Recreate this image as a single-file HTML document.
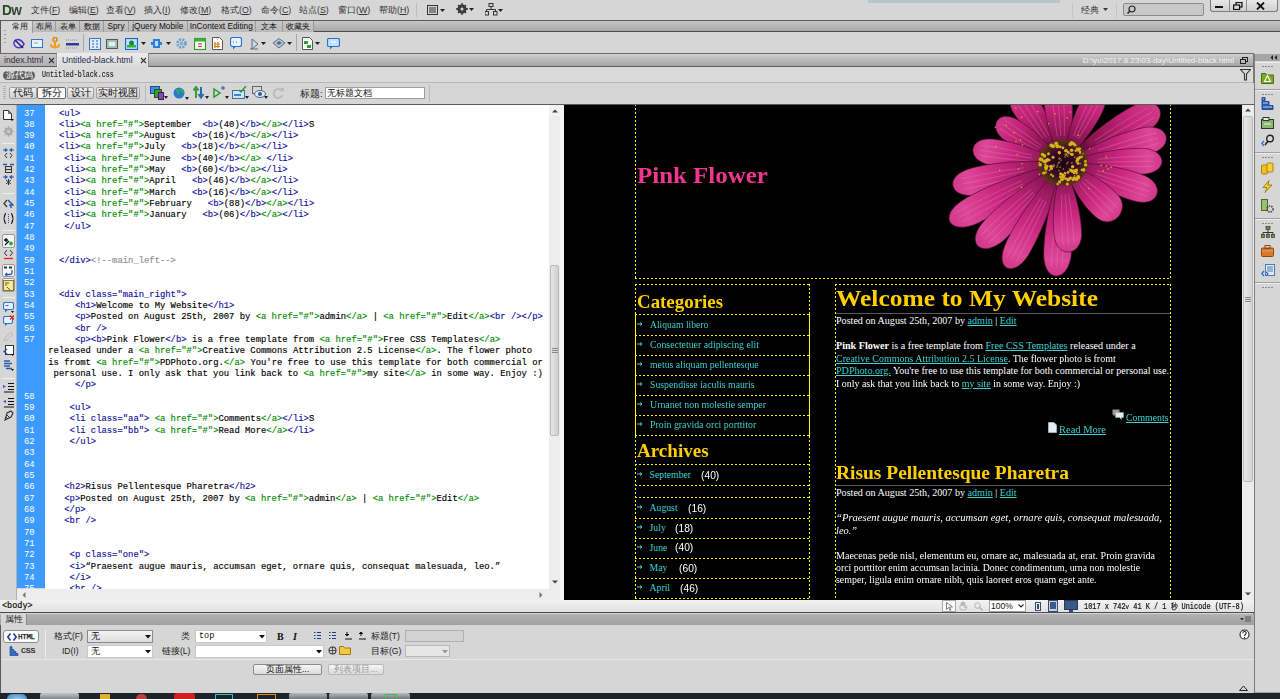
<!DOCTYPE html>
<html><head><meta charset="utf-8">
<style>
*{margin:0;padding:0;box-sizing:border-box}
html,body{width:1280px;height:699px;overflow:hidden;background:#d6d6d6;font-family:"Liberation Sans",sans-serif;font-size:10px;color:#000}
.a{position:absolute}
#menubar{left:0;top:0;width:1280px;height:20px;background:#d6d6d6}
.mi{position:absolute;top:4px;font-size:8.8px;line-height:12px;color:#333;white-space:nowrap}
#insert{left:0;top:20px;width:1280px;height:33px;background:#d6d6d6;border-top:1px solid #5a5a5a;border-left:1px solid #5a5a5a}
#itabs{left:0;top:0;width:1280px;height:11px;background:linear-gradient(#c6c6c6,#a8a8a8);border-bottom:1px solid #4c4c4c}
.it{position:absolute;top:0;height:11px;font-size:8.3px;white-space:nowrap;overflow:hidden;line-height:11px;text-align:center;color:#111;background:linear-gradient(#c9c9c9,#b8b8b8);border-right:1px solid #9a9a9a}
#doctabs{left:0;top:53px;width:1254px;height:14px;background:linear-gradient(#cfcfcf,#a4a4a4);border-top:1px solid #6a6a6a;border-bottom:1px solid #5c5c5c}
#related{left:0;top:67px;width:1254px;height:16px;background:#dadada;border-bottom:1px solid #b8b8b8}
#doctb{left:0;top:83px;width:1254px;height:22px;background:#d6d6d6;border-bottom:1px solid #5c5c5c;z-index:2}
#dock{left:1253px;top:54px;width:27px;height:639px;background:#d6d6d6;border-left:2px solid #7a7a7a}
#codeleft{left:0;top:105px;width:17px;height:495px;background:#d6d6d6;border-right:1px solid #b0b0b0}
#gutter{left:17px;top:105px;width:28px;height:483px;background:#3d9aff}
#code{left:45px;top:105px;width:504px;height:484px;background:#fff;overflow:hidden}
#vscroll{left:549px;top:105px;width:11px;height:484px;background:#ededed}
#hscroll{left:17px;top:589px;width:543px;height:11px;background:#ededed}
#splitter{left:560px;top:105px;width:4px;height:495px;background:#f4f4f4}
#preview{left:564px;top:104px;width:678px;height:496px;background:#000;overflow:hidden}
#pscroll{left:1242px;top:104px;width:12px;height:496px;background:#ececec}
#status{left:0;top:600px;width:1254px;height:13px;background:linear-gradient(#f2f2f2,#e2e2e2);border-bottom:1px solid #4a4a4a}
#prophead{left:0;top:614px;width:1254px;height:11px;background:linear-gradient(#b2b2b2,#a0a0a0)}
#props{left:0;top:625px;width:1254px;height:68px;background:#d6d6d6;border-left:1px solid #5a5a5a}
#taskbar{left:0;top:693px;width:1280px;height:6px;background:#1e2328}
.ln{position:absolute;left:0;width:28px;text-align:left;padding-left:7px;color:#fff;font-family:"Liberation Mono",monospace;font-size:8.87px;height:11.33px;line-height:11.33px}
.cl{position:absolute;left:3.3px;white-space:pre;font-family:"Liberation Mono",monospace;font-size:8.87px;line-height:11.33px;height:11.33px;color:#000;-webkit-text-stroke:0.15px currentColor}
.t{color:#10109a}.g{color:#008a00}.c{color:#8f8f8f}
.hd{position:absolute;height:1px;background:repeating-linear-gradient(90deg,#ff0 0 2px,transparent 2px 4px)}
.vd{position:absolute;width:1px;background:repeating-linear-gradient(180deg,#ff0 0 2px,transparent 2px 4px)}
.vs{position:absolute;width:1px;background:#ff0}
.gl{position:absolute;height:1px;background:#5a5a5a}
.pt{position:absolute;white-space:pre;font-family:"Liberation Serif",serif;line-height:1;transform-origin:0 0}
.lk{color:#40d0d0;text-decoration:underline}
.btn{position:absolute;top:4px;height:12px;border:1px solid #a0a0a0;border-radius:2px;background:linear-gradient(#f0f0f0,#d0d0d0);font-size:9.5px;line-height:10px;text-align:center;color:#111;white-space:nowrap}
.btn.sel{background:#f8f8f8;border-color:#6a6a6a}
.dsec{position:absolute;left:0;width:25px;background:#d6d6d6;border-top:1px solid #eeeeee;border-bottom:1px solid #a0a0a0}
.dsec::before{content:"";position:absolute;left:7px;top:3px;width:11px;height:1px;background:repeating-linear-gradient(90deg,#8a8a8a 0 2px,transparent 2px 3px)}
.plab{position:absolute;font-size:8.5px;line-height:10px;color:#222;white-space:nowrap}
.sel2{position:absolute;height:13px;background:#fff;border:1px solid #c8c8c8;font-size:8.5px;line-height:11px;padding-left:3px;color:#111;white-space:nowrap}
.dd{position:absolute}
.pbtn{position:absolute;height:11px;border:1px solid #8a8a8a;border-radius:2px;background:linear-gradient(#f6f6f6,#dadada);font-size:8.5px;line-height:9px;text-align:center;color:#111;white-space:nowrap}
</style></head><body>
<div id="menubar" class="a">
  <div class="a" style="left:2px;top:2px;font-size:15.5px;line-height:16px;font-weight:bold;color:#2e4a2c;letter-spacing:-0.8px;transform:scaleX(0.88);transform-origin:0 0">Dw</div>
  <div class="mi" style="left:31px">文件(<u>F</u>)</div>
  <div class="mi" style="left:69px">编辑(<u>E</u>)</div>
  <div class="mi" style="left:106px">查看(<u>V</u>)</div>
  <div class="mi" style="left:144px">插入(<u>I</u>)</div>
  <div class="mi" style="left:180px">修改(<u>M</u>)</div>
  <div class="mi" style="left:221px">格式(<u>O</u>)</div>
  <div class="mi" style="left:261px">命令(<u>C</u>)</div>
  <div class="mi" style="left:299px">站点(<u>S</u>)</div>
  <div class="mi" style="left:338px">窗口(<u>W</u>)</div>
  <div class="mi" style="left:379px">帮助(<u>H</u>)</div>
  <div class="a" style="left:416px;top:3px;width:1px;height:14px;background:#bdbdbd"></div>
  <svg class="a" style="left:427px;top:4px" width="18" height="12"><rect x="0.5" y="1.5" width="10" height="9" fill="none" stroke="#333"/><path d="M2,4h7M2,6h7M2,8h7" stroke="#333"/><path d="M13,5h5l-2.5,3z" fill="#222"/></svg>
  <svg class="a" style="left:456px;top:3px" width="18" height="12"><circle cx="6" cy="6" r="3.5" fill="none" stroke="#333" stroke-width="2"/><path d="M6,0v12M0,6h12M2,2l8,8M10,2l-8,8" stroke="#333" stroke-width="1.3"/><circle cx="6" cy="6" r="1.5" fill="#d6d6d6"/><path d="M13,5h5l-2.5,3z" fill="#222"/></svg>
  <svg class="a" style="left:485px;top:3px" width="18" height="13"><rect x="4" y="0.5" width="4" height="3" fill="none" stroke="#333"/><path d="M6,3.5v3M1.5,6.5h9M1.5,6.5v2M10.5,6.5v2" stroke="#333"/><rect x="0" y="8.5" width="3.5" height="3.5" fill="none" stroke="#333"/><rect x="8.5" y="8.5" width="3.5" height="3.5" fill="none" stroke="#333"/><path d="M13,6h5l-2.5,3z" fill="#222"/></svg>
  <div class="a" style="left:868px;top:0;width:192px;height:3px;background:#b9c3ca;border-radius:0 0 2px 2px"></div>
  <div class="a" style="left:1072px;top:3px;width:1px;height:15px;background:#c4c4c4"></div>
  <div class="mi" style="left:1081px;top:4px">经典</div>
  <svg class="a" style="left:1103px;top:8px" width="5" height="4"><path d="M0,0h5l-2.5,3z" fill="#333"/></svg>
  <div class="a" style="left:1116px;top:3px;width:1px;height:15px;background:#c4c4c4"></div>
  <div class="a" style="left:1123px;top:3px;width:81px;height:13px;background:#c8c8c8;border:1px solid #8a8a8a;border-radius:2px"></div>
  <svg class="a" style="left:1127px;top:5px" width="9" height="9"><circle cx="5" cy="4" r="3" fill="none" stroke="#222" stroke-width="1.2"/><path d="M3,6L0.5,8.5" stroke="#222" stroke-width="1.5"/></svg>
  <div class="a" style="left:1210px;top:0;width:68px;height:12px;background:linear-gradient(#e8e8e8,#cfcfcf);border:1px solid #7c7c7c;border-top:none;border-radius:0 0 3px 3px"></div>
  <div class="a" style="left:1229px;top:0;width:1px;height:12px;background:#8c8c8c"></div>
  <div class="a" style="left:1246px;top:0;width:1px;height:12px;background:#8c8c8c"></div>
  <div class="a" style="left:1215px;top:6px;width:8px;height:2px;background:#111"></div>
  <svg class="a" style="left:1233px;top:2px" width="10" height="8"><rect x="3" y="0.5" width="6" height="4.5" fill="none" stroke="#111" stroke-width="1.2"/><rect x="0.6" y="3" width="6" height="4.5" fill="#d8d8d8" stroke="#111" stroke-width="1.2"/></svg>
  <svg class="a" style="left:1256px;top:2px" width="9" height="8"><path d="M1,0.5L8,7.5M8,0.5L1,7.5" stroke="#111" stroke-width="1.8"/></svg>
</div>
<div id="insert" class="a">
  <div id="itabs" class="a"><div class="a" style="left:0;top:0;width:8px;height:12px;background:#d6d6d6"></div><div class="it" style="left:8.0px;width:23.5px;background:linear-gradient(#dcdcdc,#d2d2d2);border-bottom:none;height:12px">常用</div><div class="it" style="left:31.5px;width:23.5px;">布局</div><div class="it" style="left:55.0px;width:24.0px;">表单</div><div class="it" style="left:79.0px;width:24.0px;">数据</div><div class="it" style="left:103.0px;width:25.0px;">Spry</div><div class="it" style="left:128.0px;width:58.5px;">jQuery Mobile</div><div class="it" style="left:186.5px;width:68.5px;">InContext Editing</div><div class="it" style="left:255.0px;width:26.5px;">文本</div><div class="it" style="left:281.5px;width:31.5px;">收藏夹</div></div>
  <div class="a" style="left:3px;top:9px;width:2px;height:14px;background:repeating-linear-gradient(#9a9a9a 0 1.5px,transparent 1.5px 4px)"></div>
  
<svg class="a" style="left:12px;top:17px" width="12" height="12"><path d="M1,4 C3,0 8,1 11,6 C9,11 3,11 1,6z" fill="none" stroke="#4a3ec8" stroke-width="1.6"/><path d="M2,2L10,10" stroke="#221a80" stroke-width="1.4"/></svg>
<svg class="a" style="left:30px;top:18px" width="12" height="10"><rect x="0.5" y="0.5" width="11" height="8" fill="#e8f2fc" stroke="#2f78c8"/><path d="M3,4h4" stroke="#8aa"/></svg>
<svg class="a" style="left:48px;top:16px" width="12" height="13"><circle cx="6" cy="2.5" r="2" fill="none" stroke="#e08a10" stroke-width="1.6"/><path d="M6,4.5v7M2,8c0,3 8,3 8,0M1,8h2M9,8h2" stroke="#f0a020" stroke-width="2" fill="none"/></svg>
<svg class="a" style="left:65px;top:17px" width="13" height="12"><path d="M0,2h12M0,10h12" stroke="#8c8c8c" stroke-dasharray="1 1"/><rect x="0" y="5" width="13" height="2.5" fill="#2a3c9c"/></svg>
<div class="a" style="left:82px;top:13px;width:1px;height:17px;background:#a8a8a8"></div>
<svg class="a" style="left:88px;top:17px" width="12" height="12"><rect x="0.5" y="0.5" width="11" height="11" fill="#dfeeff" stroke="#3a72c0"/><path d="M3,3h2M7,3h2M3,6h2M7,6h2M3,9h2M7,9h2" stroke="#2a5ab0"/></svg>
<svg class="a" style="left:105px;top:18px" width="12" height="10"><rect x="0.5" y="0.5" width="11" height="9" fill="#cfcfcf" stroke="#555"/><rect x="2" y="2" width="8" height="6" fill="#e8f0e8" stroke="#6a9"/></svg>
<svg class="a" style="left:124px;top:17px" width="13" height="12"><rect x="0.5" y="0.5" width="12" height="11" fill="#bfe0ff" stroke="#1a64d0" stroke-width="1.2"/><circle cx="6.5" cy="5" r="2.5" fill="#1a8a2a"/><rect x="2" y="7" width="9" height="2.5" fill="#30b040"/></svg>
<svg class="a" style="left:140px;top:21px" width="5" height="4"><path d="M0,0h5l-2.5,3z" fill="#222"/></svg>
<svg class="a" style="left:150px;top:16px" width="11" height="13"><path d="M2,2h7v3h2v3h-2v3h-7v-3h-2v-3h2z" fill="#2a7ee0"/><path d="M4,4h3v5h-3z" fill="#bfe0ff"/></svg>
<svg class="a" style="left:165px;top:21px" width="5" height="4"><path d="M0,0h5l-2.5,3z" fill="#222"/></svg>
<svg class="a" style="left:175px;top:17px" width="11" height="11"><circle cx="5.5" cy="5.5" r="4" fill="none" stroke="#6aa0c8" stroke-width="2.5" stroke-dasharray="2 1.2"/><circle cx="5.5" cy="5.5" r="2" fill="#7ab4dc"/></svg>
<svg class="a" style="left:193px;top:16px" width="12" height="13"><rect x="0.5" y="1.5" width="11" height="11" fill="#f4fff0" stroke="#2a9a2a" stroke-width="1.2"/><rect x="0.5" y="1.5" width="11" height="3" fill="#3ab03a"/><path d="M4,7h4M4,9.5h4" stroke="#c03030"/></svg>
<svg class="a" style="left:211px;top:16px" width="11" height="13"><path d="M0.5,0.5h7l3,3v9h-10z" fill="#fff" stroke="#555"/><path d="M3,5v6M6,5v6M2,7h6M2,9.5h6" stroke="#e07a10" stroke-width="1.2"/></svg>
<svg class="a" style="left:229px;top:16px" width="12" height="13"><rect x="0.5" y="0.5" width="11" height="9" rx="2" fill="#e8f4ff" stroke="#2a70c8" stroke-width="1.2"/><path d="M3,9.5v3l3-3" fill="#2a70c8"/><path d="M3,5h1M6,5h1" stroke="#2a70c8"/></svg>
<svg class="a" style="left:247px;top:17px" width="12" height="12"><path d="M2,11h8M4,1v10L10,6z" fill="#c8d8f0" stroke="#666"/></svg>
<svg class="a" style="left:260px;top:21px" width="5" height="4"><path d="M0,0h5l-2.5,3z" fill="#222"/></svg>
<svg class="a" style="left:271px;top:17px" width="14" height="11"><path d="M1,5L7,0.5L13,5L7,10z" fill="#b8c8dc" stroke="#5a6a7c"/><path d="M4,5L7,3L10,5L7,7z" fill="#5a6a8c"/></svg>
<svg class="a" style="left:286px;top:21px" width="5" height="4"><path d="M0,0h5l-2.5,3z" fill="#222"/></svg>
<div class="a" style="left:295px;top:13px;width:1px;height:17px;background:#a8a8a8"></div>
<svg class="a" style="left:301px;top:16px" width="11" height="13"><path d="M0.5,0.5h7l3,3v9h-10z" fill="#fff" stroke="#555"/><path d="M2,4h4v3h-4zM5,8h4v3h-4z" fill="#2aa02a"/></svg>
<svg class="a" style="left:314px;top:21px" width="5" height="4"><path d="M0,0h5l-2.5,3z" fill="#222"/></svg>
<svg class="a" style="left:326px;top:17px" width="13" height="12"><rect x="0.5" y="0.5" width="12" height="8" rx="1.5" fill="#bfe0ff" stroke="#2a70c8" stroke-width="1.2"/><path d="M3,8.5v3l3-3" fill="#2a70c8"/><path d="M4,4h5" stroke="#fff"/></svg>

</div>
<div id="doctabs" class="a">
  <div class="a" style="left:0;top:0;width:57px;height:12px;background:linear-gradient(#c8c8c8,#b0b0b0);border-right:1px solid #9a9a9a"></div>
  <div class="a" style="left:4px;top:1px;font-size:8.6px;line-height:11px;color:#3a2a3a">index.html</div>
  <svg class="a" style="left:48px;top:3px" width="7" height="7"><path d="M1,1L6,6M6,1L1,6" stroke="#333" stroke-width="1.1"/></svg>
  <div class="a" style="left:57px;top:-1px;width:92px;height:14px;background:linear-gradient(#ececec,#dadada);border-left:1px solid #f4f4f4;border-right:1px solid #8a8a8a"></div>
  <div class="a" style="left:62px;top:1px;font-size:8.6px;line-height:11px;color:#2a2a50">Untitled-black.html</div>
  <svg class="a" style="left:140px;top:3px" width="7" height="7"><path d="M1,1L6,6M6,1L1,6" stroke="#333" stroke-width="1.1"/></svg>
  <div class="a" style="right:20px;top:1px;font-size:8px;line-height:11px;color:#f4f4f4;white-space:nowrap">D:\yu\2017.8.23\03-day\Untitled-black.html</div>
  <svg class="a" style="left:1240px;top:3px" width="8" height="7"><rect x="2.5" y="0.5" width="5" height="4" fill="none" stroke="#222"/><rect x="0.5" y="2.5" width="5" height="4" fill="#b8b8b8" stroke="#222"/></svg>
</div>
<div id="related" class="a">
  <div class="a" style="left:3px;top:4px;width:32px;height:9px;border-radius:5px;background:#5e5e5e;color:#fff;font-size:8.5px;line-height:9px;text-align:center">源代码</div>
  <div class="a" style="left:42px;top:3px;font-family:'Liberation Mono',monospace;font-size:8.5px;line-height:11px;color:#222;-webkit-text-stroke:0.15px #222;transform:scaleX(0.78);transform-origin:0 0">Untitled-black.css</div>
  <svg class="a" style="left:1240px;top:2px" width="11" height="12"><path d="M0.5,0.5h10L6.5,5v6h-2V5z" fill="none" stroke="#333" stroke-width="1.1"/></svg>
</div>
<div id="doctb" class="a">
  <div class="a" style="left:3px;top:3px;width:3px;height:14px;background:repeating-linear-gradient(#b0b0b0 0 1px,transparent 1px 2px)"></div>
  <div class="btn" style="left:9px;width:28px">代码</div>
  <div class="btn sel" style="left:37px;width:29px">拆分</div>
  <div class="btn" style="left:67px;width:27px">设计</div>
  <div class="btn" style="left:96px;width:44px">实时视图</div>
  <div class="a" style="left:145px;top:2px;width:1px;height:17px;background:#b8b8b8"></div>
  <svg class="a" style="left:150px;top:3px" width="18" height="14"><rect x="0.5" y="0.5" width="9" height="7" fill="#4a8ae0" stroke="#1a4a90"/><rect x="4.5" y="3.5" width="7" height="8" fill="#30a030" stroke="#1a5a1a"/><rect x="8.5" y="6.5" width="5" height="7" fill="#8a4ab0" stroke="#3a1a60"/><path d="M14,10h4l-2,3z" fill="#222"/></svg>
  <svg class="a" style="left:173px;top:4px" width="16" height="13"><circle cx="6" cy="6" r="5.5" fill="#2a7ad0"/><path d="M3,3c2,0 3,2 2,4M7,2c1,2 3,2 4,4" stroke="#3ab040" stroke-width="2" fill="none"/><path d="M12,10h4l-2,3z" fill="#222"/></svg>
  <svg class="a" style="left:193px;top:3px" width="16" height="14"><path d="M3,12V2M0.5,4.5L3,1L5.5,4.5" stroke="#3a9a3a" stroke-width="2" fill="none"/><path d="M8,1v10M5.5,8L8,11.5L10.5,8" stroke="#2a6ab0" stroke-width="2" fill="none"/><path d="M12,10h4l-2,3z" fill="#222"/></svg>
  <svg class="a" style="left:213px;top:3px" width="16" height="14"><path d="M1,3L7,7L1,11z" fill="none" stroke="#2a9a2a" stroke-width="1.5"/><path d="M8,2h4M10,0v4" stroke="#4a70b0" stroke-width="1.3"/><path d="M12,10h4l-2,3z" fill="#222"/></svg>
  <svg class="a" style="left:232px;top:3px" width="17" height="14"><rect x="0.5" y="4.5" width="12" height="8" fill="#cfe4f8" stroke="#4a6a9a"/><path d="M2,9h7" stroke="#2a8ad0" stroke-width="2"/><path d="M7,4L9,6L14,0" stroke="#2a9a2a" stroke-width="1.5" fill="none"/><path d="M13,10h4l-2,3z" fill="#222"/></svg>
  <svg class="a" style="left:252px;top:3px" width="16" height="14"><rect x="0.5" y="0.5" width="9" height="7" fill="none" stroke="#666"/><ellipse cx="8" cy="8" rx="5.5" ry="3.5" fill="#e0e8f0" stroke="#4a6a9a"/><circle cx="8" cy="8" r="2" fill="#2a5aa0"/><path d="M12,10h4l-2,3z" fill="#222"/></svg>
  <svg class="a" style="left:273px;top:4px" width="11" height="12"><path d="M9,4A4.5,4.5 0 1 0 9.5,8" fill="none" stroke="#bcbcbc" stroke-width="2"/><path d="M7,1h4v4z" fill="#bcbcbc"/></svg>
  <div class="a" style="left:300px;top:5px;font-size:9.5px;line-height:11px;color:#222">标题:</div>
  <div class="a" style="left:325px;top:4px;width:100px;height:12px;background:#fff;border:1px solid #9c9c9c;font-size:9px;line-height:10px;padding-left:1px;color:#111">无标题文档</div>
  <div class="a" style="left:429px;top:2px;width:1px;height:17px;background:#b8b8b8"></div>
</div>
<div id="dock" class="a">
  <div class="a" style="left:0;top:0;width:25px;height:7px;background:#a6a6a6"></div>
  <svg class="a" style="left:15px;top:1px" width="8" height="5"><path d="M3,0L0.5,2.5L3,5zM7,0L4.5,2.5L7,5z" fill="#222"/></svg>
  <div class="dsec" style="top:8px;height:28px"></div>
  <div class="dsec" style="top:36px;height:63px"></div>
  <div class="dsec" style="top:99px;height:66px"></div>
  <div class="dsec" style="top:165px;height:64px"></div>
  <div class="dsec" style="top:229px;height:410px"></div>
  <svg class="a" style="left:6px;top:18px" width="13" height="12"><path d="M0.5,1.5h4l1,1.5h7v8.5h-12z" fill="#7aa822" stroke="#4a7010"/><path d="M6.5,3.5L3.5,9.5h6z" fill="none" stroke="#fff" stroke-width="1.1"/></svg>
  <svg class="a" style="left:6px;top:43px" width="13" height="13"><path d="M1,0.5h3v4h4v4h4v4h-11z" fill="#2a5ab8" stroke="#1a3a80" stroke-width="0.8"/><path d="M2,2h1M2,6h5M2,10h9" stroke="#bcd4f4"/></svg>
  <svg class="a" style="left:6px;top:63px" width="13" height="12"><rect x="0.5" y="2.5" width="12" height="9" fill="#8ab870" stroke="#333"/><rect x="2" y="0.5" width="6" height="3" fill="#e8e8e8" stroke="#333"/><path d="M3,7h7" stroke="#e0ffe0"/></svg>
  <svg class="a" style="left:6px;top:80px" width="14" height="13"><circle cx="9" cy="4.5" r="3.3" fill="none" stroke="#222" stroke-width="1.4"/><path d="M7,7L4,11" stroke="#222" stroke-width="1.6"/><path d="M3,7L0.8,9.5L3,12M5.5,12" stroke="#2a6ad0" stroke-width="1.2" fill="none"/></svg>
  <svg class="a" style="left:6px;top:108px" width="13" height="13"><rect x="0.5" y="3" width="6" height="9" rx="1" fill="#f0c020" stroke="#b08010"/><rect x="6" y="1" width="6" height="9" rx="1" fill="#f8d030" stroke="#b08010"/></svg>
  <svg class="a" style="left:7px;top:126px" width="11" height="13"><path d="M7,0.5L1,7.5h4L3,12.5L10,5h-4z" fill="#f4d020" stroke="#8a7010" stroke-width="0.8"/></svg>
  <svg class="a" style="left:6px;top:145px" width="13" height="14"><rect x="0.5" y="0.5" width="6" height="11" fill="#9ac070" stroke="#4a6a30"/><circle cx="9" cy="10" r="3" fill="none" stroke="#444" stroke-width="1.6" stroke-dasharray="1.5 1"/></svg>
  <svg class="a" style="left:6px;top:172px" width="14" height="12"><rect x="5" y="0.5" width="4" height="3" fill="#6a9a30" stroke="#333" stroke-width="0.7"/><path d="M7,3.5v3M2,6.5h10M2,6.5v2M7,6.5v2M12,6.5v2" stroke="#333"/><rect x="0.5" y="8.5" width="3" height="3" fill="#6a9a30" stroke="#333" stroke-width="0.7"/><rect x="5.5" y="8.5" width="3" height="3" fill="#6a9a30" stroke="#333" stroke-width="0.7"/><rect x="10.5" y="8.5" width="3" height="3" fill="#6a9a30" stroke="#333" stroke-width="0.7"/></svg>
  <svg class="a" style="left:6px;top:191px" width="13" height="12"><rect x="0.5" y="3" width="12" height="8.5" rx="1" fill="#d8782a" stroke="#8a4a10"/><rect x="4" y="0.5" width="5" height="3" fill="none" stroke="#8a4a10"/><path d="M1,6h11" stroke="#f0a060"/></svg>
  <svg class="a" style="left:6px;top:210px" width="14" height="13"><rect x="4.5" y="0.5" width="9" height="11" fill="#e0ecf8" stroke="#4a7ab0"/><path d="M6,3h6M6,5h6M6,7h6" stroke="#4a7ab0"/><path d="M3,7L0.8,9.5L3,12M5,8l2,1.5l-2,2.5" stroke="#2a6ad0" stroke-width="1.2" fill="none"/></svg>
</div>
<div id="codeleft" class="a">
<svg class="a" style="left:3px;top:4.9px" width="11" height="11"><path d="M0.5,0.5h5l3,3v6h-8z" fill="#fff" stroke="#333"/><path d="M5.5,0.5v3h3" fill="#4a8ad0" stroke="#333" stroke-width="0.6"/><path d="M7,9h4l-2,2z" fill="#111"/></svg>
<svg class="a" style="left:3px;top:21.0px" width="11" height="11"><circle cx="5.5" cy="5.5" r="3" fill="none" stroke="#aaa" stroke-width="2"/><path d="M5.5,0v11M0,5.5h11M1.5,1.5l8,8M9.5,1.5l-8,8" stroke="#aaa" stroke-width="1"/><circle cx="5.5" cy="5.5" r="1.3" fill="#d6d6d6"/></svg>
<div class="a" style="left:2px;top:38px;width:13px;height:1px;background:#b4b4b4;border-bottom:1px solid #eee"></div>
<svg class="a" style="left:3px;top:42.5px" width="11" height="11"><path d="M0,2h4M7,2h4M2,0.5l2,1.5l-2,1.5M9,0.5l-2,1.5l2,1.5" stroke="#2a5ab0" stroke-width="1.2" fill="none"/><path d="M4,5l-2,2.5l2,2.5M7,5l2,2.5l-2,2.5" stroke="#333" fill="none"/></svg>
<svg class="a" style="left:3px;top:57.5px" width="11" height="11"><path d="M0,1.5h4M7,1.5h4" stroke="#2a5ab0" stroke-width="1.5"/><rect x="2.5" y="3.5" width="6" height="6" fill="none" stroke="#333"/><path d="M2.5,6.5h6" stroke="#333"/></svg>
<svg class="a" style="left:3px;top:70.2px" width="11" height="11"><path d="M0,2h4M7,2h4M2,0.5l2,1.5l-2,1.5M9,0.5l-2,1.5l2,1.5" stroke="#2a5ab0" stroke-width="1.2" fill="none"/><path d="M5.5,4v6M3,5l5,4M8,5l-5,4" stroke="#333"/></svg>
<div class="a" style="left:2px;top:88px;width:13px;height:1px;background:#b4b4b4;border-bottom:1px solid #eee"></div>
<svg class="a" style="left:3px;top:93.0px" width="11" height="11"><path d="M4,2l-3,3.5l3,3.5" stroke="#333" stroke-width="1.2" fill="none"/><path d="M5,2L10,7L7,7L8.5,10" stroke="#2a5ab0" stroke-width="1.5" fill="none"/></svg>
<svg class="a" style="left:3px;top:107.9px" width="11" height="11"><path d="M3,0.5C1,0.5 2,5.5 0.5,5.5C2,5.5 1,10.5 3,10.5M8,0.5C10,0.5 9,5.5 10.5,5.5C9,5.5 10,10.5 8,10.5" stroke="#111" stroke-width="1.2" fill="none"/><path d="M5.5,1v9" stroke="#2a5ab0" stroke-dasharray="1 1"/></svg>
<div class="a" style="left:2px;top:125px;width:13px;height:1px;background:#b4b4b4;border-bottom:1px solid #eee"></div>
<div class="a" style="left:2px;top:129px;width:13px;height:14px;background:#f6f6f6;border:1px solid #9a9a9a;border-radius:2px"></div>
<svg class="a" style="left:3px;top:130.8px" width="11" height="11"><path d="M1,4h4M3,2v4" stroke="#111" stroke-width="1.3"/><path d="M2,9l4-4" stroke="#111" stroke-width="1.3"/><circle cx="8" cy="7.5" r="2" fill="#30b030"/></svg>
<svg class="a" style="left:3px;top:143.5px" width="11" height="11"><path d="M4,1L1.5,4L4,7M7,1L9.5,4L7,7" stroke="#333" fill="none"/><path d="M1,9.5h9" stroke="#e02020" stroke-width="1.3"/></svg>
<div class="a" style="left:2px;top:159px;width:13px;height:13px;background:#f6f6f6;border:1px solid #9a9a9a;border-radius:2px"></div>
<svg class="a" style="left:3px;top:159.8px" width="11" height="11"><path d="M1,1.5h3v2h-3zM6,1.5h3v2h-3z" fill="#333"/><path d="M9,5v2.5a2,2 0 0 1-2,2h-4M4,8l-1.5,1.5l1.5,1.5" stroke="#2a5ab0" stroke-width="1.3" fill="none"/></svg>
<div class="a" style="left:2px;top:173px;width:13px;height:14px;background:#f6f6f6;border:1px solid #9a9a9a;border-radius:2px"></div>
<svg class="a" style="left:3px;top:174.5px" width="11" height="11"><rect x="0.5" y="0.5" width="10" height="10" fill="#f4e8a0" stroke="#8a7a30"/><path d="M2,3h4M2,5h2M4,7l3,3" stroke="#6a5a10"/></svg>
<div class="a" style="left:2px;top:191.60000000000002px;width:13px;height:1px;background:#b4b4b4;border-bottom:1px solid #eee"></div>
<svg class="a" style="left:3px;top:196.5px" width="11" height="11"><rect x="0.5" y="0.5" width="10" height="7" rx="1.5" fill="#e8f2ff" stroke="#2a70d0" stroke-width="1.1"/><path d="M2,7.5v3l3-3" fill="#2a70d0"/><path d="M2.5,3.5h3" stroke="#2a70d0"/><path d="M8,9h3l-1.5,2z" fill="#111"/></svg>
<svg class="a" style="left:3px;top:210.1px" width="11" height="11"><rect x="0.5" y="1.5" width="9" height="7" rx="1.5" fill="#e8f2ff" stroke="#2a70d0" stroke-width="1.1"/><path d="M2,8.5v2.5l3-2.5" fill="#2a70d0"/><path d="M7,0.5l4,4M11,0.5l-4,4" stroke="#e02020" stroke-width="1.3"/></svg>
<svg class="a" style="left:3px;top:226.2px" width="11" height="11"><path d="M1,10l3-1l6-6l-2-2l-6,6z" fill="none" stroke="#b8b8b8"/><path d="M1,10h9" stroke="#c8c8c8"/></svg>
<svg class="a" style="left:3px;top:239.9px" width="11" height="11"><rect x="2.5" y="0.5" width="8" height="9" fill="#fff" stroke="#333"/><path d="M4,4l-3,2.5l3,2.5" stroke="#2a5ab0" stroke-width="1.4" fill="none"/><path d="M8,9h3l-1.5,2z" fill="#111"/></svg>
<svg class="a" style="left:3px;top:254.5px" width="11" height="11"><path d="M1,1h6M1,3.5h8M1,6h6M3,8.5h6" stroke="#2a5ab0" stroke-width="1.3"/><path d="M8,9h3l-1.5,2z" fill="#111"/></svg>
<div class="a" style="left:2px;top:273px;width:13px;height:1px;background:#b4b4b4;border-bottom:1px solid #eee"></div>
<svg class="a" style="left:3px;top:276.5px" width="11" height="11"><path d="M5,1.5h6M5,4.5h6M5,7.5h6M1,10h10" stroke="#111" stroke-width="1.2"/><path d="M0,3l3,1.5l-3,1.5" fill="#2a5ab0"/></svg>
<svg class="a" style="left:3px;top:291.5px" width="11" height="11"><path d="M5,1.5h6M5,4.5h6M5,7.5h6M1,10h10" stroke="#111" stroke-width="1.2"/><path d="M3,3l-3,1.5l3,1.5" fill="#2a5ab0"/></svg>
<svg class="a" style="left:3px;top:305.1px" width="11" height="11"><path d="M2,10l2-7l4-2l2,2l-2,4z" fill="none" stroke="#333" stroke-width="1.1"/><path d="M4,5l3,3M3,7l2,2" stroke="#333"/></svg>
</div>
<div id="gutter" class="a">
<div class="ln" style="top:3.50px">37</div>
<div class="ln" style="top:14.83px">38</div>
<div class="ln" style="top:26.16px">39</div>
<div class="ln" style="top:37.49px">40</div>
<div class="ln" style="top:48.82px">41</div>
<div class="ln" style="top:60.15px">42</div>
<div class="ln" style="top:71.48px">43</div>
<div class="ln" style="top:82.81px">44</div>
<div class="ln" style="top:94.14px">45</div>
<div class="ln" style="top:105.47px">46</div>
<div class="ln" style="top:116.80px">47</div>
<div class="ln" style="top:128.13px">48</div>
<div class="ln" style="top:139.46px">49</div>
<div class="ln" style="top:150.79px">50</div>
<div class="ln" style="top:162.12px">51</div>
<div class="ln" style="top:173.45px">52</div>
<div class="ln" style="top:184.78px">53</div>
<div class="ln" style="top:196.11px">54</div>
<div class="ln" style="top:207.44px">55</div>
<div class="ln" style="top:218.77px">56</div>
<div class="ln" style="top:230.10px">57</div>
<div class="ln" style="top:286.75px">58</div>
<div class="ln" style="top:298.08px">59</div>
<div class="ln" style="top:309.41px">60</div>
<div class="ln" style="top:320.74px">61</div>
<div class="ln" style="top:332.07px">62</div>
<div class="ln" style="top:343.40px">63</div>
<div class="ln" style="top:354.73px">64</div>
<div class="ln" style="top:366.06px">65</div>
<div class="ln" style="top:377.39px">66</div>
<div class="ln" style="top:388.72px">67</div>
<div class="ln" style="top:400.05px">68</div>
<div class="ln" style="top:411.38px">69</div>
<div class="ln" style="top:422.71px">70</div>
<div class="ln" style="top:434.04px">71</div>
<div class="ln" style="top:445.37px">72</div>
<div class="ln" style="top:456.70px">73</div>
<div class="ln" style="top:468.03px">74</div>
<div class="ln" style="top:479.36px">75</div>
</div>
<div id="code" class="a">
<div class="cl" style="top:3.50px">  <span class="t">&lt;ul&gt;</span></div>
<div class="cl" style="top:14.83px">  <span class="t">&lt;li&gt;</span><span class="g">&lt;a href="#"&gt;</span>September  <span class="t">&lt;b&gt;</span>(40)<span class="t">&lt;/b&gt;</span><span class="g">&lt;/a&gt;</span><span class="t">&lt;/li&gt;</span>S</div>
<div class="cl" style="top:26.16px">  <span class="t">&lt;li&gt;</span><span class="g">&lt;a href="#"&gt;</span>August   <span class="t">&lt;b&gt;</span>(16)<span class="t">&lt;/b&gt;</span><span class="g">&lt;/a&gt;</span><span class="t">&lt;/li&gt;</span></div>
<div class="cl" style="top:37.49px">  <span class="t">&lt;li&gt;</span><span class="g">&lt;a href="#"&gt;</span>July   <span class="t">&lt;b&gt;</span>(18)<span class="t">&lt;/b&gt;</span><span class="g">&lt;/a&gt;</span><span class="t">&lt;/li&gt;</span></div>
<div class="cl" style="top:48.82px">   <span class="t">&lt;li&gt;</span><span class="g">&lt;a href="#"&gt;</span>June  <span class="t">&lt;b&gt;</span>(40)<span class="t">&lt;/b&gt;</span><span class="g">&lt;/a&gt;</span> <span class="t">&lt;/li&gt;</span></div>
<div class="cl" style="top:60.15px">   <span class="t">&lt;li&gt;</span><span class="g">&lt;a href="#"&gt;</span>May   <span class="t">&lt;b&gt;</span>(60)<span class="t">&lt;/b&gt;</span><span class="g">&lt;/a&gt;</span><span class="t">&lt;/li&gt;</span></div>
<div class="cl" style="top:71.48px">   <span class="t">&lt;li&gt;</span><span class="g">&lt;a href="#"&gt;</span>April   <span class="t">&lt;b&gt;</span>(46)<span class="t">&lt;/b&gt;</span><span class="g">&lt;/a&gt;</span><span class="t">&lt;/li&gt;</span></div>
<div class="cl" style="top:82.81px">   <span class="t">&lt;li&gt;</span><span class="g">&lt;a href="#"&gt;</span>March   <span class="t">&lt;b&gt;</span>(16)<span class="t">&lt;/b&gt;</span><span class="g">&lt;/a&gt;</span><span class="t">&lt;/li&gt;</span></div>
<div class="cl" style="top:94.14px">   <span class="t">&lt;li&gt;</span><span class="g">&lt;a href="#"&gt;</span>February   <span class="t">&lt;b&gt;</span>(88)<span class="t">&lt;/b&gt;</span><span class="g">&lt;/a&gt;</span><span class="t">&lt;/li&gt;</span></div>
<div class="cl" style="top:105.47px">   <span class="t">&lt;li&gt;</span><span class="g">&lt;a href="#"&gt;</span>January   <span class="t">&lt;b&gt;</span>(06)<span class="t">&lt;/b&gt;</span><span class="g">&lt;/a&gt;</span><span class="t">&lt;/li&gt;</span></div>
<div class="cl" style="top:116.80px">   <span class="t">&lt;/ul&gt;</span></div>
<div class="cl" style="top:150.79px">  <span class="t">&lt;/div&gt;</span><span class="c">&lt;!--main_left--&gt;</span></div>
<div class="cl" style="top:184.78px">  <span class="t">&lt;div class="main_right"&gt;</span></div>
<div class="cl" style="top:196.11px">     <span class="t">&lt;h1&gt;</span>Welcome to My Website<span class="t">&lt;/h1&gt;</span></div>
<div class="cl" style="top:207.44px">     <span class="t">&lt;p&gt;</span>Posted on August 25th, 2007 by <span class="g">&lt;a href="#"&gt;</span>admin<span class="g">&lt;/a&gt;</span> | <span class="g">&lt;a href="#"&gt;</span>Edit<span class="g">&lt;/a&gt;</span><span class="t">&lt;br /&gt;</span><span class="t">&lt;/p&gt;</span></div>
<div class="cl" style="top:218.77px">     <span class="t">&lt;br /&gt;</span></div>
<div class="cl" style="top:230.10px">     <span class="t">&lt;p&gt;</span><span class="t">&lt;b&gt;</span>Pink Flower<span class="t">&lt;/b&gt;</span> is a free template from <span class="g">&lt;a href="#"&gt;</span>Free CSS Templates<span class="g">&lt;/a&gt;</span></div>
<div class="cl" style="top:241.43px">released under a <span class="g">&lt;a href="#"&gt;</span>Creative Commons Attribution 2.5 License<span class="g">&lt;/a&gt;</span>. The flower photo</div>
<div class="cl" style="top:252.76px">is fromt <span class="g">&lt;a href="#"&gt;</span>PDPhoto.org.<span class="g">&lt;/a&gt;</span> You're free to use this template for both commercial or</div>
<div class="cl" style="top:264.09px"> personal use. I only ask that you link back to <span class="g">&lt;a href="#"&gt;</span>my site<span class="g">&lt;/a&gt;</span> in some way. Enjoy :)</div>
<div class="cl" style="top:275.42px">     <span class="t">&lt;/p&gt;</span></div>
<div class="cl" style="top:298.08px">    <span class="t">&lt;ul&gt;</span></div>
<div class="cl" style="top:309.41px">    <span class="t">&lt;li class="aa"&gt;</span> <span class="g">&lt;a href="#"&gt;</span>Comments<span class="g">&lt;/a&gt;</span><span class="t">&lt;/li&gt;</span>S</div>
<div class="cl" style="top:320.74px">    <span class="t">&lt;li class="bb"&gt;</span> <span class="g">&lt;a href="#"&gt;</span>Read More<span class="g">&lt;/a&gt;</span><span class="t">&lt;/li&gt;</span></div>
<div class="cl" style="top:332.07px">    <span class="t">&lt;/ul&gt;</span></div>
<div class="cl" style="top:377.39px">   <span class="t">&lt;h2&gt;</span>Risus Pellentesque Pharetra<span class="t">&lt;/h2&gt;</span></div>
<div class="cl" style="top:388.72px">   <span class="t">&lt;p&gt;</span>Posted on August 25th, 2007 by <span class="g">&lt;a href="#"&gt;</span>admin<span class="g">&lt;/a&gt;</span> | <span class="g">&lt;a href="#"&gt;</span>Edit<span class="g">&lt;/a&gt;</span></div>
<div class="cl" style="top:400.05px">   <span class="t">&lt;/p&gt;</span></div>
<div class="cl" style="top:411.38px">   <span class="t">&lt;br /&gt;</span></div>
<div class="cl" style="top:445.37px">    <span class="t">&lt;p class="one"&gt;</span></div>
<div class="cl" style="top:456.70px">    <span class="t">&lt;i&gt;</span>“Praesent augue mauris, accumsan eget, ornare quis, consequat malesuada, leo.”</div>
<div class="cl" style="top:468.03px">    <span class="t">&lt;/i&gt;</span></div>
<div class="cl" style="top:479.36px">    <span class="t">&lt;br /&gt;</span></div>
</div>
<div id="vscroll" class="a">
  <div class="a" style="left:0;top:0;width:11px;height:11px;background:#f2f2f2"></div>
  <svg class="a" style="left:3px;top:4px" width="6" height="4"><path d="M0,3.5L3,0.5L6,3.5z" fill="#444"/></svg>
  <div class="a" style="left:1px;top:160px;width:9px;height:171px;background:linear-gradient(90deg,#e6e6e6,#d0d0d0);border:1px solid #b8b8b8;border-radius:2px"></div>
  <svg class="a" style="left:3px;top:243px" width="6" height="5"><path d="M0,0.5h6M0,2.5h6M0,4.5h6" stroke="#888"/></svg>
  <svg class="a" style="left:3px;top:475px" width="6" height="4"><path d="M0,0.5L3,3.5L6,0.5z" fill="#444"/></svg>
</div>
<div id="hscroll" class="a">
  <svg class="a" style="left:5px;top:3px" width="4" height="6"><path d="M3.5,0L0.5,3L3.5,6z" fill="#777"/></svg>
  <svg class="a" style="left:522px;top:3px" width="4" height="6"><path d="M0.5,0L3.5,3L0.5,6z" fill="#777"/></svg>
</div>
<div id="splitter" class="a"></div>
<div id="preview" class="a">
<svg class="a" style="left:0;top:0" width="678" height="496" viewBox="0 0 678 496"><defs><linearGradient id="pg" x1="0" y1="0" x2="1" y2="0"><stop offset="0" stop-color="#30041e"/><stop offset="0.22" stop-color="#96185c"/><stop offset="0.55" stop-color="#c8267e"/><stop offset="0.85" stop-color="#dc4696"/><stop offset="1" stop-color="#d03888"/></linearGradient><linearGradient id="pgb" x1="0" y1="0" x2="1" y2="0"><stop offset="0" stop-color="#2a041a"/><stop offset="0.3" stop-color="#8a1452"/><stop offset="0.7" stop-color="#c42478"/><stop offset="1" stop-color="#d03a88"/></linearGradient><radialGradient id="cg"><stop offset="0" stop-color="#1a0414"/><stop offset="0.55" stop-color="#3a0a2a"/><stop offset="1" stop-color="#5a3a10"/></radialGradient><filter id="bl" x="-20%" y="-20%" width="140%" height="140%"><feGaussianBlur stdDeviation="0.4"/></filter></defs><g filter="url(#bl)"><path d="M4,0 C17.5,-8.2 48.1,-15.0 71.6,-13.8 C84.7,-12.0 87.4,-3.8 87.4,0 C87.4,4.5 84.7,12.8 69.9,13.8 C48.1,15.0 17.5,8.2 4,0 Z" fill="url(#pgb)" stroke="#4a0a2c" stroke-width="0.6" transform="translate(499.0,59.0) rotate(-123.3)"/><path d="M30.6,-3.4 Q61.2,-6.1 80.4,-5.4" stroke="#f07ab8" stroke-width="1.1" fill="none" opacity="0.35" transform="translate(499.0,59.0) rotate(-123.3)"/><path d="M30.6,0.0 Q61.2,0.0 80.4,0.0" stroke="#f07ab8" stroke-width="1.1" fill="none" opacity="0.35" transform="translate(499.0,59.0) rotate(-123.3)"/><path d="M30.6,3.4 Q61.2,6.1 80.4,5.4" stroke="#f07ab8" stroke-width="1.1" fill="none" opacity="0.35" transform="translate(499.0,59.0) rotate(-123.3)"/><path d="M4,0 C15.4,-8.2 42.5,-15.0 63.3,-13.8 C74.9,-12.0 77.2,-3.8 77.2,0 C77.2,4.5 74.9,12.8 61.8,13.8 C42.5,15.0 15.4,8.2 4,0 Z" fill="url(#pgb)" stroke="#4a0a2c" stroke-width="0.6" transform="translate(499.0,59.0) rotate(-94.5)"/><path d="M27.0,-3.4 Q54.1,-6.1 71.1,-5.4" stroke="#f07ab8" stroke-width="1.1" fill="none" opacity="0.35" transform="translate(499.0,59.0) rotate(-94.5)"/><path d="M27.0,0.0 Q54.1,0.0 71.1,0.0" stroke="#f07ab8" stroke-width="1.1" fill="none" opacity="0.35" transform="translate(499.0,59.0) rotate(-94.5)"/><path d="M27.0,3.4 Q54.1,6.1 71.1,5.4" stroke="#f07ab8" stroke-width="1.1" fill="none" opacity="0.35" transform="translate(499.0,59.0) rotate(-94.5)"/><path d="M4,0 C16.4,-7.2 45.0,-13.0 67.1,-12.0 C79.4,-10.4 81.8,-3.2 81.8,0 C81.8,3.9 79.4,11.0 65.5,12.0 C45.0,13.0 16.4,7.2 4,0 Z" fill="url(#pgb)" stroke="#4a0a2c" stroke-width="0.6" transform="translate(499.0,59.0) rotate(-63.1)"/><path d="M28.6,-2.9 Q57.3,-5.3 75.3,-4.7" stroke="#f07ab8" stroke-width="1.1" fill="none" opacity="0.35" transform="translate(499.0,59.0) rotate(-63.1)"/><path d="M28.6,0.0 Q57.3,0.0 75.3,0.0" stroke="#f07ab8" stroke-width="1.1" fill="none" opacity="0.35" transform="translate(499.0,59.0) rotate(-63.1)"/><path d="M28.6,2.9 Q57.3,5.3 75.3,4.7" stroke="#f07ab8" stroke-width="1.1" fill="none" opacity="0.35" transform="translate(499.0,59.0) rotate(-63.1)"/><path d="M4,0 C22.1,-8.8 60.9,-16.0 90.7,-14.7 C107.3,-12.8 110.6,-4.0 110.6,0 C110.6,4.8 107.3,13.6 88.5,14.7 C60.9,16.0 22.1,8.8 4,0 Z" fill="url(#pgb)" stroke="#4a0a2c" stroke-width="0.6" transform="translate(499.0,59.0) rotate(-29.8)"/><path d="M38.7,-3.6 Q77.4,-6.5 101.8,-5.8" stroke="#f07ab8" stroke-width="1.1" fill="none" opacity="0.35" transform="translate(499.0,59.0) rotate(-29.8)"/><path d="M38.7,0.0 Q77.4,0.0 101.8,0.0" stroke="#f07ab8" stroke-width="1.1" fill="none" opacity="0.35" transform="translate(499.0,59.0) rotate(-29.8)"/><path d="M38.7,3.6 Q77.4,6.5 101.8,5.8" stroke="#f07ab8" stroke-width="1.1" fill="none" opacity="0.35" transform="translate(499.0,59.0) rotate(-29.8)"/><path d="M4,0 C15.6,-7.2 43.0,-13.0 64.1,-12.0 C75.9,-10.4 78.2,-3.2 78.2,0 C78.2,3.9 75.9,11.0 62.6,12.0 C43.0,13.0 15.6,7.2 4,0 Z" fill="url(#pgb)" stroke="#4a0a2c" stroke-width="0.6" transform="translate(499.0,59.0) rotate(-147.5)"/><path d="M27.4,-2.9 Q54.8,-5.3 72.0,-4.7" stroke="#f07ab8" stroke-width="1.1" fill="none" opacity="0.35" transform="translate(499.0,59.0) rotate(-147.5)"/><path d="M27.4,0.0 Q54.8,0.0 72.0,0.0" stroke="#f07ab8" stroke-width="1.1" fill="none" opacity="0.35" transform="translate(499.0,59.0) rotate(-147.5)"/><path d="M27.4,2.9 Q54.8,5.3 72.0,4.7" stroke="#f07ab8" stroke-width="1.1" fill="none" opacity="0.35" transform="translate(499.0,59.0) rotate(-147.5)"/><path d="M4,0 C21.3,-8.2 58.6,-15.0 87.3,-13.8 C103.3,-12.0 106.5,-3.8 106.5,0 C106.5,4.5 103.3,12.8 85.2,13.8 C58.6,15.0 21.3,8.2 4,0 Z" fill="url(#pg)" stroke="#4a0a2c" stroke-width="0.6" transform="translate(499.0,59.0) rotate(-14.7)"/><path d="M37.3,-3.4 Q74.5,-6.1 98.0,-5.4" stroke="#f07ab8" stroke-width="1.1" fill="none" opacity="0.35" transform="translate(499.0,59.0) rotate(-14.7)"/><path d="M37.3,0.0 Q74.5,0.0 98.0,0.0" stroke="#f07ab8" stroke-width="1.1" fill="none" opacity="0.35" transform="translate(499.0,59.0) rotate(-14.7)"/><path d="M37.3,3.4 Q74.5,6.1 98.0,5.4" stroke="#f07ab8" stroke-width="1.1" fill="none" opacity="0.35" transform="translate(499.0,59.0) rotate(-14.7)"/><path d="M4,0 C18.2,-7.7 50.1,-14.0 74.7,-12.9 C88.3,-11.2 91.1,-3.5 91.1,0 C91.1,4.2 88.3,11.9 72.9,12.9 C50.1,14.0 18.2,7.7 4,0 Z" fill="url(#pg)" stroke="#4a0a2c" stroke-width="0.6" transform="translate(499.0,59.0) rotate(-171.2)"/><path d="M31.9,-3.1 Q63.8,-5.7 83.8,-5.0" stroke="#f07ab8" stroke-width="1.1" fill="none" opacity="0.35" transform="translate(499.0,59.0) rotate(-171.2)"/><path d="M31.9,0.0 Q63.8,0.0 83.8,0.0" stroke="#f07ab8" stroke-width="1.1" fill="none" opacity="0.35" transform="translate(499.0,59.0) rotate(-171.2)"/><path d="M31.9,3.1 Q63.8,5.7 83.8,5.0" stroke="#f07ab8" stroke-width="1.1" fill="none" opacity="0.35" transform="translate(499.0,59.0) rotate(-171.2)"/><path d="M4,0 C19.8,-7.7 54.5,-14.0 81.2,-12.9 C96.0,-11.2 99.0,-3.5 99.0,0 C99.0,4.2 96.0,11.9 79.2,12.9 C54.5,14.0 19.8,7.7 4,0 Z" fill="url(#pg)" stroke="#4a0a2c" stroke-width="0.6" transform="translate(499.0,59.0) rotate(-1.2)"/><path d="M34.7,-3.1 Q69.3,-5.7 91.1,-5.0" stroke="#f07ab8" stroke-width="1.1" fill="none" opacity="0.35" transform="translate(499.0,59.0) rotate(-1.2)"/><path d="M34.7,0.0 Q69.3,0.0 91.1,0.0" stroke="#f07ab8" stroke-width="1.1" fill="none" opacity="0.35" transform="translate(499.0,59.0) rotate(-1.2)"/><path d="M34.7,3.1 Q69.3,5.7 91.1,5.0" stroke="#f07ab8" stroke-width="1.1" fill="none" opacity="0.35" transform="translate(499.0,59.0) rotate(-1.2)"/><path d="M4,0 C22.5,-8.2 61.8,-15.0 92.2,-13.8 C109.0,-12.0 112.4,-3.8 112.4,0 C112.4,4.5 109.0,12.8 89.9,13.8 C61.8,15.0 22.5,8.2 4,0 Z" fill="url(#pg)" stroke="#4a0a2c" stroke-width="0.6" transform="translate(499.0,59.0) rotate(168.2)"/><path d="M39.3,-3.4 Q78.7,-6.1 103.4,-5.4" stroke="#f07ab8" stroke-width="1.1" fill="none" opacity="0.35" transform="translate(499.0,59.0) rotate(168.2)"/><path d="M39.3,0.0 Q78.7,0.0 103.4,0.0" stroke="#f07ab8" stroke-width="1.1" fill="none" opacity="0.35" transform="translate(499.0,59.0) rotate(168.2)"/><path d="M39.3,3.4 Q78.7,6.1 103.4,5.4" stroke="#f07ab8" stroke-width="1.1" fill="none" opacity="0.35" transform="translate(499.0,59.0) rotate(168.2)"/><path d="M4,0 C19.8,-8.2 54.4,-15.0 81.2,-13.8 C96.0,-12.0 99.0,-3.8 99.0,0 C99.0,4.5 96.0,12.8 79.2,13.8 C54.4,15.0 19.8,8.2 4,0 Z" fill="url(#pg)" stroke="#4a0a2c" stroke-width="0.6" transform="translate(499.0,59.0) rotate(18.3)"/><path d="M34.6,-3.4 Q69.3,-6.1 91.1,-5.4" stroke="#f07ab8" stroke-width="1.1" fill="none" opacity="0.35" transform="translate(499.0,59.0) rotate(18.3)"/><path d="M34.6,0.0 Q69.3,0.0 91.1,0.0" stroke="#f07ab8" stroke-width="1.1" fill="none" opacity="0.35" transform="translate(499.0,59.0) rotate(18.3)"/><path d="M34.6,3.4 Q69.3,6.1 91.1,5.4" stroke="#f07ab8" stroke-width="1.1" fill="none" opacity="0.35" transform="translate(499.0,59.0) rotate(18.3)"/><path d="M4,0 C25.5,-8.2 70.1,-15.0 104.5,-13.8 C123.7,-12.0 127.5,-3.8 127.5,0 C127.5,4.5 123.7,12.8 102.0,13.8 C70.1,15.0 25.5,8.2 4,0 Z" fill="url(#pg)" stroke="#4a0a2c" stroke-width="0.6" transform="translate(499.0,59.0) rotate(152.4)"/><path d="M44.6,-3.4 Q89.2,-6.1 117.3,-5.4" stroke="#f07ab8" stroke-width="1.1" fill="none" opacity="0.35" transform="translate(499.0,59.0) rotate(152.4)"/><path d="M44.6,0.0 Q89.2,0.0 117.3,0.0" stroke="#f07ab8" stroke-width="1.1" fill="none" opacity="0.35" transform="translate(499.0,59.0) rotate(152.4)"/><path d="M44.6,3.4 Q89.2,6.1 117.3,5.4" stroke="#f07ab8" stroke-width="1.1" fill="none" opacity="0.35" transform="translate(499.0,59.0) rotate(152.4)"/><path d="M4,0 C23.8,-8.2 65.3,-15.0 97.4,-13.8 C115.2,-12.0 118.8,-3.8 118.8,0 C118.8,4.5 115.2,12.8 95.0,13.8 C65.3,15.0 23.8,8.2 4,0 Z" fill="url(#pg)" stroke="#4a0a2c" stroke-width="0.6" transform="translate(499.0,59.0) rotate(135.7)"/><path d="M41.6,-3.4 Q83.2,-6.1 109.3,-5.4" stroke="#f07ab8" stroke-width="1.1" fill="none" opacity="0.35" transform="translate(499.0,59.0) rotate(135.7)"/><path d="M41.6,0.0 Q83.2,0.0 109.3,0.0" stroke="#f07ab8" stroke-width="1.1" fill="none" opacity="0.35" transform="translate(499.0,59.0) rotate(135.7)"/><path d="M41.6,3.4 Q83.2,6.1 109.3,5.4" stroke="#f07ab8" stroke-width="1.1" fill="none" opacity="0.35" transform="translate(499.0,59.0) rotate(135.7)"/><path d="M4,0 C23.8,-7.7 65.5,-14.0 97.6,-12.9 C115.4,-11.2 119.0,-3.5 119.0,0 C119.0,4.2 115.4,11.9 95.2,12.9 C65.5,14.0 23.8,7.7 4,0 Z" fill="url(#pg)" stroke="#4a0a2c" stroke-width="0.6" transform="translate(499.0,59.0) rotate(118.1)"/><path d="M41.6,-3.1 Q83.3,-5.7 109.5,-5.0" stroke="#f07ab8" stroke-width="1.1" fill="none" opacity="0.35" transform="translate(499.0,59.0) rotate(118.1)"/><path d="M41.6,0.0 Q83.3,0.0 109.5,0.0" stroke="#f07ab8" stroke-width="1.1" fill="none" opacity="0.35" transform="translate(499.0,59.0) rotate(118.1)"/><path d="M41.6,3.1 Q83.3,5.7 109.5,5.0" stroke="#f07ab8" stroke-width="1.1" fill="none" opacity="0.35" transform="translate(499.0,59.0) rotate(118.1)"/><path d="M4,0 C22.6,-8.2 62.3,-15.0 92.8,-13.8 C109.8,-12.0 113.2,-3.8 113.2,0 C113.2,4.5 109.8,12.8 90.6,13.8 C62.3,15.0 22.6,8.2 4,0 Z" fill="url(#pg)" stroke="#4a0a2c" stroke-width="0.6" transform="translate(499.0,59.0) rotate(93.5)"/><path d="M39.6,-3.4 Q79.3,-6.1 104.2,-5.4" stroke="#f07ab8" stroke-width="1.1" fill="none" opacity="0.35" transform="translate(499.0,59.0) rotate(93.5)"/><path d="M39.6,0.0 Q79.3,0.0 104.2,0.0" stroke="#f07ab8" stroke-width="1.1" fill="none" opacity="0.35" transform="translate(499.0,59.0) rotate(93.5)"/><path d="M39.6,3.4 Q79.3,6.1 104.2,5.4" stroke="#f07ab8" stroke-width="1.1" fill="none" opacity="0.35" transform="translate(499.0,59.0) rotate(93.5)"/><path d="M4,0 C17.8,-8.2 49.1,-15.0 73.1,-13.8 C86.5,-12.0 89.2,-3.8 89.2,0 C89.2,4.5 86.5,12.8 71.4,13.8 C49.1,15.0 17.8,8.2 4,0 Z" fill="url(#pg)" stroke="#4a0a2c" stroke-width="0.6" transform="translate(499.0,59.0) rotate(86.1)"/><path d="M31.2,-3.4 Q62.4,-6.1 82.1,-5.4" stroke="#f07ab8" stroke-width="1.1" fill="none" opacity="0.35" transform="translate(499.0,59.0) rotate(86.1)"/><path d="M31.2,0.0 Q62.4,0.0 82.1,0.0" stroke="#f07ab8" stroke-width="1.1" fill="none" opacity="0.35" transform="translate(499.0,59.0) rotate(86.1)"/><path d="M31.2,3.4 Q62.4,6.1 82.1,5.4" stroke="#f07ab8" stroke-width="1.1" fill="none" opacity="0.35" transform="translate(499.0,59.0) rotate(86.1)"/><path d="M4,0 C15.4,-9.4 42.4,-17.0 63.2,-15.6 C74.8,-13.6 77.1,-4.2 77.1,0 C77.1,5.1 74.8,14.4 61.7,15.6 C42.4,17.0 15.4,9.4 4,0 Z" fill="url(#pg)" stroke="#4a0a2c" stroke-width="0.6" transform="translate(499.0,59.0) rotate(44.5)"/><path d="M27.0,-3.8 Q54.0,-6.9 70.9,-6.1" stroke="#f07ab8" stroke-width="1.1" fill="none" opacity="0.35" transform="translate(499.0,59.0) rotate(44.5)"/><path d="M27.0,0.0 Q54.0,0.0 70.9,0.0" stroke="#f07ab8" stroke-width="1.1" fill="none" opacity="0.35" transform="translate(499.0,59.0) rotate(44.5)"/><path d="M27.0,3.8 Q54.0,6.9 70.9,6.1" stroke="#f07ab8" stroke-width="1.1" fill="none" opacity="0.35" transform="translate(499.0,59.0) rotate(44.5)"/></g><ellipse cx="499" cy="59" rx="25" ry="23" fill="url(#cg)"/><circle cx="495.0" cy="66.6" r="0.9" fill="#8a6a20"/><circle cx="495.4" cy="54.2" r="0.9" fill="#8a6a20"/><circle cx="485.4" cy="56.0" r="1.2" fill="#d8b020"/><circle cx="494.6" cy="58.8" r="0.9" fill="#8a6a20"/><circle cx="493.4" cy="61.3" r="0.9" fill="#8a6a20"/><circle cx="511.6" cy="66.7" r="1.8" fill="#d8b020"/><circle cx="506.7" cy="66.2" r="1.7" fill="#d8b020"/><circle cx="515.5" cy="53.6" r="1.5" fill="#d8b020"/><circle cx="503.9" cy="58.3" r="0.9" fill="#8a6a20"/><circle cx="506.8" cy="49.9" r="1.2" fill="#d8b020"/><circle cx="508.4" cy="67.2" r="1.8" fill="#d8b020"/><circle cx="506.4" cy="74.1" r="1.7" fill="#d8b020"/><circle cx="487.2" cy="70.6" r="1.2" fill="#d8b020"/><circle cx="508.7" cy="62.6" r="1.7" fill="#d8b020"/><circle cx="487.4" cy="64.4" r="1.6" fill="#d8b020"/><circle cx="486.9" cy="62.5" r="1.8" fill="#d8b020"/><circle cx="495.4" cy="48.8" r="1.6" fill="#d8b020"/><circle cx="477.8" cy="55.8" r="1.8" fill="#d8b020"/><circle cx="493.6" cy="80.0" r="1.2" fill="#d8b020"/><circle cx="481.6" cy="68.4" r="1.2" fill="#d8b020"/><circle cx="494.5" cy="59.3" r="0.9" fill="#8a6a20"/><circle cx="489.1" cy="42.4" r="1.6" fill="#d8b020"/><circle cx="508.1" cy="50.4" r="1.7" fill="#d8b020"/><circle cx="484.5" cy="49.7" r="1.5" fill="#d8b020"/><circle cx="511.0" cy="41.1" r="1.5" fill="#d8b020"/><circle cx="496.1" cy="54.4" r="0.9" fill="#8a6a20"/><circle cx="493.4" cy="42.2" r="2.0" fill="#d8b020"/><circle cx="504.4" cy="48.5" r="1.4" fill="#d8b020"/><circle cx="497.3" cy="56.1" r="0.9" fill="#8a6a20"/><circle cx="489.8" cy="61.1" r="1.2" fill="#8a6a20"/><circle cx="517.8" cy="65.9" r="1.2" fill="#d8b020"/><circle cx="499.2" cy="72.7" r="1.9" fill="#d8b020"/><circle cx="512.5" cy="66.1" r="1.6" fill="#d8b020"/><circle cx="514.5" cy="45.8" r="1.9" fill="#d8b020"/><circle cx="496.4" cy="72.9" r="1.4" fill="#d8b020"/><circle cx="515.8" cy="44.8" r="1.2" fill="#d8b020"/><circle cx="504.0" cy="68.4" r="1.3" fill="#d8b020"/><circle cx="481.4" cy="60.6" r="1.3" fill="#d8b020"/><circle cx="513.9" cy="59.4" r="1.4" fill="#d8b020"/><circle cx="478.5" cy="50.4" r="1.7" fill="#d8b020"/><circle cx="481.0" cy="57.3" r="1.7" fill="#d8b020"/><circle cx="519.6" cy="65.9" r="1.8" fill="#d8b020"/><circle cx="513.5" cy="45.2" r="1.5" fill="#d8b020"/><circle cx="493.0" cy="63.2" r="0.9" fill="#8a6a20"/><circle cx="495.2" cy="54.9" r="0.9" fill="#8a6a20"/><circle cx="508.6" cy="63.1" r="1.2" fill="#d8b020"/><circle cx="496.2" cy="63.2" r="0.9" fill="#8a6a20"/><circle cx="507.9" cy="59.0" r="0.9" fill="#8a6a20"/><circle cx="510.1" cy="66.8" r="1.1" fill="#d8b020"/><circle cx="511.7" cy="46.8" r="1.2" fill="#d8b020"/><circle cx="498.8" cy="71.9" r="1.4" fill="#d8b020"/><circle cx="514.2" cy="73.0" r="2.0" fill="#d8b020"/><circle cx="483.4" cy="62.2" r="1.2" fill="#d8b020"/><circle cx="509.8" cy="66.7" r="1.3" fill="#d8b020"/><circle cx="503.4" cy="51.3" r="1.1" fill="#8a6a20"/><circle cx="514.9" cy="54.2" r="1.2" fill="#d8b020"/><circle cx="495.4" cy="58.0" r="0.9" fill="#8a6a20"/><circle cx="476.6" cy="55.2" r="1.9" fill="#d8b020"/><circle cx="495.1" cy="48.5" r="1.4" fill="#d8b020"/><circle cx="509.1" cy="75.6" r="1.6" fill="#d8b020"/><circle cx="501.4" cy="46.7" r="1.3" fill="#d8b020"/><circle cx="507.6" cy="38.9" r="1.9" fill="#d8b020"/><circle cx="506.2" cy="40.4" r="1.8" fill="#d8b020"/><circle cx="501.4" cy="74.6" r="1.4" fill="#d8b020"/><circle cx="502.8" cy="59.7" r="0.9" fill="#8a6a20"/><circle cx="496.8" cy="69.9" r="1.7" fill="#d8b020"/><circle cx="513.8" cy="55.1" r="1.9" fill="#d8b020"/><circle cx="521.4" cy="57.4" r="1.4" fill="#d8b020"/><circle cx="501.0" cy="69.2" r="1.3" fill="#d8b020"/><circle cx="504.1" cy="75.6" r="1.9" fill="#d8b020"/><circle cx="507.6" cy="46.2" r="1.7" fill="#d8b020"/><circle cx="501.1" cy="52.9" r="0.9" fill="#8a6a20"/><circle cx="487.3" cy="41.4" r="1.8" fill="#d8b020"/><circle cx="499.0" cy="43.9" r="1.3" fill="#d8b020"/><circle cx="502.2" cy="46.8" r="1.8" fill="#d8b020"/><circle cx="513.2" cy="56.6" r="1.5" fill="#d8b020"/><circle cx="517.5" cy="52.9" r="1.3" fill="#d8b020"/><circle cx="505.2" cy="65.1" r="0.9" fill="#8a6a20"/><circle cx="516.1" cy="48.0" r="1.2" fill="#d8b020"/><circle cx="509.5" cy="39.8" r="1.7" fill="#d8b020"/><circle cx="489.0" cy="72.1" r="1.2" fill="#d8b020"/><circle cx="521.6" cy="60.9" r="1.7" fill="#d8b020"/><circle cx="477.1" cy="55.5" r="1.5" fill="#d8b020"/><circle cx="513.5" cy="44.7" r="1.3" fill="#d8b020"/><circle cx="498.9" cy="70.8" r="1.3" fill="#d8b020"/><circle cx="489.0" cy="53.2" r="1.5" fill="#d8b020"/><circle cx="513.9" cy="74.3" r="1.4" fill="#d8b020"/><circle cx="482.0" cy="63.3" r="1.9" fill="#d8b020"/><circle cx="479.7" cy="69.0" r="1.6" fill="#d8b020"/><circle cx="482.7" cy="55.9" r="1.1" fill="#d8b020"/><circle cx="489.8" cy="62.4" r="1.1" fill="#8a6a20"/><circle cx="501.9" cy="50.4" r="1.5" fill="#8a6a20"/><circle cx="496.3" cy="42.9" r="1.4" fill="#d8b020"/><circle cx="482.0" cy="57.1" r="1.8" fill="#d8b020"/><circle cx="512.5" cy="69.1" r="1.3" fill="#d8b020"/><circle cx="495.6" cy="77.9" r="1.6" fill="#d8b020"/><circle cx="480.4" cy="51.8" r="1.9" fill="#d8b020"/><circle cx="482.1" cy="65.0" r="1.6" fill="#d8b020"/><circle cx="479.9" cy="57.6" r="1.5" fill="#d8b020"/><circle cx="483.4" cy="55.9" r="1.9" fill="#d8b020"/><circle cx="492.2" cy="39.6" r="1.9" fill="#d8b020"/><circle cx="498.0" cy="75.3" r="1.9" fill="#d8b020"/><circle cx="503.6" cy="52.2" r="0.9" fill="#8a6a20"/><circle cx="510.0" cy="69.1" r="1.2" fill="#d8b020"/><circle cx="499.4" cy="64.9" r="0.9" fill="#8a6a20"/><circle cx="489.1" cy="42.1" r="1.9" fill="#d8b020"/><circle cx="510.0" cy="74.3" r="1.7" fill="#d8b020"/><circle cx="512.5" cy="75.1" r="2.0" fill="#d8b020"/><circle cx="503.3" cy="79.9" r="1.5" fill="#d8b020"/><circle cx="476.2" cy="60.7" r="1.8" fill="#d8b020"/><circle cx="510.6" cy="71.9" r="0.8" fill="#e0b030" opacity="0.9"/><circle cx="452.0" cy="37.8" r="0.8" fill="#e0b030" opacity="0.9"/><circle cx="501.1" cy="71.4" r="0.8" fill="#e0b030" opacity="0.9"/><circle cx="484.8" cy="19.8" r="0.8" fill="#e0b030" opacity="0.9"/><circle cx="450.1" cy="28.8" r="0.8" fill="#e0b030" opacity="0.9"/><circle cx="525.6" cy="44.7" r="0.8" fill="#e0b030" opacity="0.9"/><circle cx="457.6" cy="13.4" r="0.8" fill="#e0b030" opacity="0.9"/><circle cx="547.2" cy="63.1" r="0.8" fill="#e0b030" opacity="0.9"/><circle cx="504.0" cy="-13.2" r="0.8" fill="#e0b030" opacity="0.9"/><circle cx="516.0" cy="59.6" r="0.8" fill="#e0b030" opacity="0.9"/><circle cx="542.3" cy="53.0" r="0.8" fill="#e0b030" opacity="0.9"/><circle cx="485.3" cy="66.3" r="0.8" fill="#e0b030" opacity="0.9"/><circle cx="435.7" cy="66.2" r="0.8" fill="#e0b030" opacity="0.9"/><circle cx="503.2" cy="13.7" r="0.8" fill="#e0b030" opacity="0.9"/><circle cx="524.8" cy="84.5" r="0.8" fill="#e0b030" opacity="0.9"/><circle cx="442.2" cy="21.3" r="0.8" fill="#e0b030" opacity="0.9"/><circle cx="510.8" cy="53.2" r="0.8" fill="#e0b030" opacity="0.9"/><circle cx="473.6" cy="7.6" r="0.8" fill="#e0b030" opacity="0.9"/><circle cx="544.2" cy="65.0" r="0.8" fill="#e0b030" opacity="0.9"/><circle cx="451.9" cy="3.9" r="0.8" fill="#e0b030" opacity="0.9"/><circle cx="539.2" cy="66.9" r="0.8" fill="#e0b030" opacity="0.9"/><circle cx="542.3" cy="62.1" r="0.8" fill="#e0b030" opacity="0.9"/><circle cx="453.4" cy="50.5" r="0.8" fill="#e0b030" opacity="0.9"/><circle cx="431.4" cy="23.3" r="0.8" fill="#e0b030" opacity="0.9"/><circle cx="485.8" cy="66.3" r="0.8" fill="#e0b030" opacity="0.9"/><circle cx="456.4" cy="36.1" r="0.8" fill="#e0b030" opacity="0.9"/><circle cx="512.1" cy="57.9" r="0.8" fill="#e0b030" opacity="0.9"/><circle cx="519.0" cy="49.7" r="0.8" fill="#e0b030" opacity="0.9"/><circle cx="475.4" cy="70.4" r="0.8" fill="#e0b030" opacity="0.9"/><circle cx="491.1" cy="9.8" r="0.8" fill="#e0b030" opacity="0.9"/><circle cx="458.4" cy="41.0" r="0.8" fill="#e0b030" opacity="0.9"/><circle cx="475.2" cy="58.6" r="0.8" fill="#e0b030" opacity="0.9"/><circle cx="488.9" cy="62.4" r="0.8" fill="#e0b030" opacity="0.9"/><circle cx="484.1" cy="0.6" r="0.8" fill="#e0b030" opacity="0.9"/><circle cx="504.8" cy="76.2" r="0.8" fill="#e0b030" opacity="0.9"/><circle cx="514.4" cy="31.2" r="0.8" fill="#e0b030" opacity="0.9"/><circle cx="506.2" cy="8.0" r="0.8" fill="#e0b030" opacity="0.9"/><circle cx="431.8" cy="42.6" r="0.8" fill="#e0b030" opacity="0.9"/><circle cx="454.6" cy="65.3" r="0.8" fill="#e0b030" opacity="0.9"/><circle cx="464.9" cy="-10.9" r="0.8" fill="#e0b030" opacity="0.9"/><circle cx="457.6" cy="83.4" r="0.8" fill="#e0b030" opacity="0.9"/><circle cx="475.8" cy="-1.1" r="0.8" fill="#e0b030" opacity="0.9"/><circle cx="458.0" cy="59.8" r="0.8" fill="#e0b030" opacity="0.9"/><circle cx="516.0" cy="49.5" r="0.8" fill="#e0b030" opacity="0.9"/><circle cx="537.2" cy="61.4" r="0.8" fill="#e0b030" opacity="0.9"/></svg>
<div class="vd" style="left:71px;top:0px;height:175px"></div>
<div class="vd" style="left:606px;top:0px;height:175px"></div>
<div class="hd" style="left:71px;top:174px;width:536px"></div>
<div class="hd" style="left:71px;top:180px;width:175px"></div>
<div class="vd" style="left:71px;top:180px;height:316px"></div>
<div class="vd" style="left:245px;top:180px;height:30px"></div>
<div class="hd" style="left:71px;top:210px;width:175px"></div>
<div class="vs" style="left:71px;top:210px;height:122px"></div>
<div class="vs" style="left:245px;top:210px;height:122px"></div>
<div class="hd" style="left:71px;top:231px;width:175px"></div>
<div class="hd" style="left:71px;top:251px;width:175px"></div>
<div class="hd" style="left:71px;top:271px;width:175px"></div>
<div class="hd" style="left:71px;top:291px;width:175px"></div>
<div class="hd" style="left:71px;top:311px;width:175px"></div>
<div class="hd" style="left:71px;top:331px;width:175px"></div>
<div class="vd" style="left:245px;top:332px;height:164px"></div>
<div class="hd" style="left:71px;top:360px;width:175px"></div>
<div class="hd" style="left:71px;top:381px;width:175px"></div>
<div class="hd" style="left:71px;top:393px;width:175px"></div>
<div class="hd" style="left:71px;top:414px;width:175px"></div>
<div class="hd" style="left:71px;top:434px;width:175px"></div>
<div class="hd" style="left:71px;top:454px;width:175px"></div>
<div class="hd" style="left:71px;top:474px;width:175px"></div>
<div class="hd" style="left:71px;top:494px;width:175px"></div>
<div class="hd" style="left:271px;top:180px;width:336px"></div>
<div class="vd" style="left:271px;top:180px;height:316px"></div>
<div class="vd" style="left:606px;top:180px;height:316px"></div>
<div class="gl" style="left:272px;top:209px;width:334px"></div>
<div class="gl" style="left:272px;top:381px;width:334px"></div>
<svg class="a" style="left:73px;top:217px" width="6" height="6"><path d="M0,3H4.5M3,1.5L5,3L3,4.5" stroke="#40d0d0" stroke-width="1" fill="none"/></svg>
<svg class="a" style="left:73px;top:237px" width="6" height="6"><path d="M0,3H4.5M3,1.5L5,3L3,4.5" stroke="#40d0d0" stroke-width="1" fill="none"/></svg>
<svg class="a" style="left:73px;top:257px" width="6" height="6"><path d="M0,3H4.5M3,1.5L5,3L3,4.5" stroke="#40d0d0" stroke-width="1" fill="none"/></svg>
<svg class="a" style="left:73px;top:277px" width="6" height="6"><path d="M0,3H4.5M3,1.5L5,3L3,4.5" stroke="#40d0d0" stroke-width="1" fill="none"/></svg>
<svg class="a" style="left:73px;top:297px" width="6" height="6"><path d="M0,3H4.5M3,1.5L5,3L3,4.5" stroke="#40d0d0" stroke-width="1" fill="none"/></svg>
<svg class="a" style="left:73px;top:317px" width="6" height="6"><path d="M0,3H4.5M3,1.5L5,3L3,4.5" stroke="#40d0d0" stroke-width="1" fill="none"/></svg>
<svg class="a" style="left:73px;top:367px" width="6" height="6"><path d="M0,3H4.5M3,1.5L5,3L3,4.5" stroke="#40d0d0" stroke-width="1" fill="none"/></svg>
<svg class="a" style="left:73px;top:400px" width="6" height="6"><path d="M0,3H4.5M3,1.5L5,3L3,4.5" stroke="#40d0d0" stroke-width="1" fill="none"/></svg>
<svg class="a" style="left:73px;top:420px" width="6" height="6"><path d="M0,3H4.5M3,1.5L5,3L3,4.5" stroke="#40d0d0" stroke-width="1" fill="none"/></svg>
<svg class="a" style="left:73px;top:440px" width="6" height="6"><path d="M0,3H4.5M3,1.5L5,3L3,4.5" stroke="#40d0d0" stroke-width="1" fill="none"/></svg>
<svg class="a" style="left:73px;top:460px" width="6" height="6"><path d="M0,3H4.5M3,1.5L5,3L3,4.5" stroke="#40d0d0" stroke-width="1" fill="none"/></svg>
<svg class="a" style="left:73px;top:480px" width="6" height="6"><path d="M0,3H4.5M3,1.5L5,3L3,4.5" stroke="#40d0d0" stroke-width="1" fill="none"/></svg>
<svg class="a" style="left:548px;top:305px" width="12" height="11"><path d="M0.5,0.5h7v5h-4l-2,2v-2h-1z" fill="#9a9a9a"/><path d="M3.5,3.5h8v5h-2v2l-2-2h-4z" fill="#e8e8f0" stroke="#8aa" stroke-width="0.5"/></svg>
<svg class="a" style="left:484px;top:318px" width="9" height="11"><path d="M0.5,0.5h5.5l2.5,2.5v7.5h-8z" fill="#e6ecf4" stroke="#b8c4d0" stroke-width="0.7"/></svg>
<div class="pt" style="left:73.0px;top:58.70px;font-size:24px;color:#f0378f;font-weight:bold;transform:scaleX(1.0381);">Pink Flower</div>
<div class="pt" style="left:73.0px;top:188.73px;font-size:18px;color:#ffd000;font-weight:bold;transform:scaleX(1.0492);">Categories</div>
<div class="pt" style="left:85.5px;top:216.18px;font-size:9.7px;color:#40d0d0;transform:scaleX(0.9894);">Aliquam libero</div>
<div class="pt" style="left:85.5px;top:236.18px;font-size:9.7px;color:#40d0d0;transform:scaleX(1.0129);">Consectetuer adipiscing elit</div>
<div class="pt" style="left:85.5px;top:256.18px;font-size:9.7px;color:#40d0d0;transform:scaleX(1.0101);">metus aliquam pellentesque</div>
<div class="pt" style="left:85.5px;top:276.18px;font-size:9.7px;color:#40d0d0;transform:scaleX(1.0070);">Suspendisse iaculis mauris</div>
<div class="pt" style="left:85.5px;top:296.18px;font-size:9.7px;color:#40d0d0;transform:scaleX(1.0194);">Urnanet non molestie semper</div>
<div class="pt" style="left:85.5px;top:316.18px;font-size:9.7px;color:#40d0d0;transform:scaleX(1.0199);">Proin gravida orci porttitor</div>
<div class="pt" style="left:73.0px;top:337.73px;font-size:18px;color:#ffd000;font-weight:bold;transform:scaleX(1.0580);">Archives</div>
<div class="pt" style="left:85.6px;top:366.38px;font-size:9.7px;color:#40d0d0;">September</div>
<div class="pt" style="left:136.7px;top:365.71px;font-size:10.5px;color:#fff;font-family:'Liberation Sans',sans-serif;transform:scaleX(0.9793);">(40)</div>
<div class="pt" style="left:85.6px;top:399.38px;font-size:9.7px;color:#40d0d0;">August</div>
<div class="pt" style="left:123.5px;top:398.71px;font-size:10.5px;color:#fff;font-family:'Liberation Sans',sans-serif;transform:scaleX(0.9793);">(16)</div>
<div class="pt" style="left:85.6px;top:419.18px;font-size:9.7px;color:#40d0d0;">July</div>
<div class="pt" style="left:110.9px;top:418.51px;font-size:10.5px;color:#fff;font-family:'Liberation Sans',sans-serif;transform:scaleX(0.9793);">(18)</div>
<div class="pt" style="left:85.6px;top:439.08px;font-size:9.7px;color:#40d0d0;">June</div>
<div class="pt" style="left:110.9px;top:438.41px;font-size:10.5px;color:#fff;font-family:'Liberation Sans',sans-serif;transform:scaleX(0.9793);">(40)</div>
<div class="pt" style="left:85.6px;top:459.18px;font-size:9.7px;color:#40d0d0;">May</div>
<div class="pt" style="left:114.8px;top:458.51px;font-size:10.5px;color:#fff;font-family:'Liberation Sans',sans-serif;transform:scaleX(0.9793);">(60)</div>
<div class="pt" style="left:85.6px;top:479.28px;font-size:9.7px;color:#40d0d0;">April</div>
<div class="pt" style="left:115.8px;top:478.61px;font-size:10.5px;color:#fff;font-family:'Liberation Sans',sans-serif;transform:scaleX(0.9793);">(46)</div>
<div class="pt" style="left:272.0px;top:182.74px;font-size:23px;color:#ffd000;font-weight:bold;transform:scaleX(1.1075);">Welcome to My Website</div>
<div class="pt" style="left:272.0px;top:212.04px;font-size:10.1px;color:#fff;">Posted on August 25th, 2007 by <u class="lk">admin</u> | <u class="lk">Edit</u></div>
<div class="pt" style="left:272.0px;top:237.34px;font-size:10.1px;color:#fff;"><b>Pink Flower</b> is a free template from <u class="lk">Free CSS Templates</u> released under a</div>
<div class="pt" style="left:272.0px;top:249.84px;font-size:10.1px;color:#fff;transform:scaleX(0.9875);"><u class="lk">Creative Commons Attribution 2.5 License</u>. The flower photo is fromt</div>
<div class="pt" style="left:272.0px;top:262.14px;font-size:10.1px;color:#fff;"><u class="lk">PDPhoto.org.</u> You're free to use this template for both commercial or personal use.</div>
<div class="pt" style="left:272.0px;top:274.94px;font-size:10.1px;color:#fff;transform:scaleX(0.9837);">I only ask that you link back to <u class="lk">my site</u> in some way. Enjoy :)</div>
<div class="pt" style="left:562.4px;top:308.54px;font-size:10.1px;color:#fff;transform:scaleX(0.9737);"><u class="lk">Comments</u></div>
<div class="pt" style="left:495.0px;top:320.94px;font-size:10.1px;color:#fff;transform:scaleX(1.0412);"><u class="lk">Read More</u></div>
<div class="pt" style="left:272.0px;top:358.79px;font-size:19px;color:#ffd000;font-weight:bold;transform:scaleX(1.0235);">Risus Pellentesque Pharetra</div>
<div class="pt" style="left:272.0px;top:383.94px;font-size:10.1px;color:#fff;">Posted on August 25th, 2007 by <u class="lk">admin</u> | <u class="lk">Edit</u></div>
<div class="pt" style="left:272.0px;top:409.14px;font-size:10.1px;color:#fff;font-style:italic;transform:scaleX(1.0507);">“Praesent augue mauris, accumsan eget, ornare quis, consequat malesuada,</div>
<div class="pt" style="left:272.0px;top:421.74px;font-size:10.1px;color:#fff;font-style:italic;transform:scaleX(1.0260);">leo.”</div>
<div class="pt" style="left:272.0px;top:446.84px;font-size:10.1px;color:#fff;transform:scaleX(0.9949);">Maecenas pede nisl, elementum eu, ornare ac, malesuada at, erat. Proin gravida</div>
<div class="pt" style="left:272.0px;top:459.14px;font-size:10.1px;color:#fff;transform:scaleX(0.9727);">orci porttitor enim accumsan lacinia. Donec condimentum, urna non molestie</div>
<div class="pt" style="left:272.0px;top:471.34px;font-size:10.1px;color:#fff;transform:scaleX(0.9812);">semper, ligula enim ornare nibh, quis laoreet eros quam eget ante.</div>
</div>
<div id="pscroll" class="a">
  <svg class="a" style="left:3px;top:4px" width="6" height="4"><path d="M0,3.5L3,0.5L6,3.5z" fill="#444"/></svg>
  <div class="a" style="left:1px;top:12px;width:10px;height:366px;background:linear-gradient(90deg,#e8e8e8,#d4d4d4);border:1px solid #bcbcbc;border-radius:2px"></div>
  <svg class="a" style="left:3px;top:193px" width="6" height="5"><path d="M0,0.5h6M0,2.5h6M0,4.5h6" stroke="#888"/></svg>
  <svg class="a" style="left:3px;top:488px" width="6" height="4"><path d="M0,0.5L3,3.5L6,0.5z" fill="#444"/></svg>
</div>
<div id="status" class="a">
  <div class="a" style="left:2px;top:1px;font-family:'Liberation Mono',monospace;font-size:8.5px;line-height:11px;color:#111;-webkit-text-stroke:0.2px #111">&lt;body&gt;</div>
  <div class="a" style="left:942px;top:0;width:14px;height:12px;background:#fafafa;border:1px solid #a8a8a8"></div>
  <svg class="a" style="left:946px;top:2px" width="7" height="9"><path d="M0.5,0.5v7l2-2l1.5,3l1-0.5l-1.5-3h3z" fill="#fff" stroke="#666" stroke-width="0.8"/></svg>
  <svg class="a" style="left:959px;top:1px" width="10" height="10"><path d="M2,9C0,6 1,4 2,5V2h1v3V1h1v4V1h1v4V2h1v5l1-2h1l-1,4z" fill="none" stroke="#b0b0b0" stroke-width="0.8"/></svg>
  <svg class="a" style="left:974px;top:2px" width="9" height="9"><circle cx="3.5" cy="3.5" r="2.8" fill="none" stroke="#b0b0b0"/><path d="M5.5,5.5L8.5,8.5" stroke="#b0b0b0" stroke-width="1.4"/></svg>
  <div class="a" style="left:989px;top:0;width:37px;height:12px;background:#fff;border:1px solid #a0a0a0;font-size:8.5px;line-height:10px;padding-left:1px;color:#111">100%</div>
  <svg class="a" style="left:1018px;top:4px" width="6" height="4"><path d="M0.5,0.5L3,3L5.5,0.5" fill="none" stroke="#222" stroke-width="1.1"/></svg>
  <svg class="a" style="left:1034px;top:1px" width="8" height="11"><rect x="1.5" y="1.5" width="5" height="8" fill="#e8eef8" stroke="#3a4a6a"/><rect x="3" y="3" width="2" height="5" fill="#3a4a6a"/></svg>
  <svg class="a" style="left:1048px;top:0" width="10" height="12"><rect x="0.5" y="0.5" width="9" height="11" fill="#c8d4e4" stroke="#3a4a6a"/><rect x="2" y="2" width="6" height="7" fill="#3a5a8a"/></svg>
  <svg class="a" style="left:1064px;top:0" width="14" height="12"><rect x="0.5" y="0.5" width="13" height="9" fill="#3a5a8a" stroke="#2a3a5a"/><rect x="5" y="10" width="4" height="2" fill="#3a4a6a"/></svg>
  <div class="a" style="left:1084px;top:1px;font-family:'Liberation Mono',monospace;font-size:8.3px;line-height:11px;color:#111;white-space:pre;-webkit-text-stroke:0.2px #111;transform:scaleX(0.835);transform-origin:0 0">1017 x 742<span style="font-size:7px">v</span> 41 K / 1 秒 Unicode (UTF-8)</div>
</div>
<div id="prophead" class="a">
  <div class="a" style="left:1px;top:0;width:26px;height:12px;background:#d6d6d6;border-right:1px solid #8a8a8a;font-size:8.5px;line-height:11px;text-align:center;color:#222">属性</div>
  <svg class="a" style="left:1240px;top:2px" width="11" height="7"><path d="M0,2h4l-2,2.5z" fill="#333"/><path d="M5,1h6M5,3h6M5,5h6" stroke="#555"/></svg>
</div>
<div id="props" class="a">
  <div class="a" style="left:2px;top:5px;width:36px;height:13px;background:#fbfbfb;border:1px solid #8c8c8c;border-radius:3px"></div>
  <svg class="a" style="left:6px;top:8px" width="10" height="8"><path d="M3.5,0.5L0.8,4L3.5,7.5M6.5,0.5L9.2,4L6.5,7.5" fill="none" stroke="#1a3a8a" stroke-width="1.5"/></svg>
  <div class="a" style="left:17px;top:7px;font-family:'Liberation Mono',monospace;font-size:7.5px;line-height:10px;color:#111;-webkit-text-stroke:0.25px #111;letter-spacing:-0.3px">HTML</div>
  <svg class="a" style="left:8px;top:21px" width="10" height="10"><path d="M1,0.5h2v3h2v2h2v2h2v2h-8z" fill="#3a6ac8" stroke="#1a3a90" stroke-width="0.6"/></svg>
  <div class="a" style="left:20px;top:21px;font-family:'Liberation Mono',monospace;font-size:8px;line-height:10px;color:#111;-webkit-text-stroke:0.2px #111">CSS</div>
  <div class="a" style="left:44px;top:5px;width:1px;height:28px;background:#b8b8b8;border-right:1px solid #ececec"></div>
  <div class="plab" style="left:53px;top:6px">格式(F)</div>
  <div class="sel2" style="left:86px;top:5px;width:66px;background:linear-gradient(#f4f4f4,#dcdcdc);border-color:#8a8a8a">无</div>
  <div class="plab" style="left:61px;top:21px">ID(I)</div>
  <div class="sel2" style="left:86px;top:20px;width:66px">无</div>
  <div class="plab" style="left:180px;top:6px">类</div>
  <div class="sel2" style="left:194px;top:5px;width:72px;font-family:'Liberation Mono',monospace">top</div>
  <div class="plab" style="left:161px;top:21px">链接(L)</div>
  <div class="sel2" style="left:194px;top:20px;width:129px"></div>
  <svg class="dd" style="left:144px;top:10px" width="6" height="4"><path d="M0,0h6l-3,3.5z" fill="#111"/></svg>
  <svg class="dd" style="left:144px;top:25px" width="6" height="4"><path d="M0,0h6l-3,3.5z" fill="#111"/></svg>
  <svg class="dd" style="left:258px;top:10px" width="6" height="4"><path d="M0,0h6l-3,3.5z" fill="#111"/></svg>
  <svg class="dd" style="left:315px;top:25px" width="6" height="4"><path d="M0,0h6l-3,3.5z" fill="#111"/></svg>
  <svg class="a" style="left:327px;top:21px" width="9" height="9"><circle cx="4.5" cy="4.5" r="3.5" fill="none" stroke="#333" stroke-width="1.1"/><path d="M1,4.5h7M4.5,1v7" stroke="#333" stroke-width="0.8"/></svg>
  <svg class="a" style="left:338px;top:20px" width="12" height="10"><path d="M0.5,1.5h4l1,1.5h6v6.5h-11z" fill="#f4c840" stroke="#a07810"/></svg>
  <div class="a" style="left:276px;top:6px;font-family:'Liberation Serif',serif;font-weight:bold;font-size:10px;line-height:11px;color:#111">B</div>
  <div class="a" style="left:292px;top:6px;font-family:'Liberation Serif',serif;font-style:italic;font-weight:bold;font-size:10px;line-height:11px;color:#111">I</div>
  <svg class="a" style="left:313px;top:6px" width="52" height="9"><path d="M0,1.5h1.5M0,4.5h1.5M0,7.5h1.5M3,1.5h4M3,4.5h4M3,7.5h4" stroke="#1a3a8a" stroke-width="1.2"/><path d="M15,1.5h1.5M15,4.5h1.5M15,7.5h1.5M18,1.5h4M18,4.5h4M18,7.5h4" stroke="#1a3a8a" stroke-width="1.2"/><path d="M31,8h7M33,1v4M31,3l2,2l2-2" stroke="#111" stroke-width="1"/><path d="M45,8h7M47,5v-4M45,3l2-2l2,2" stroke="#111" stroke-width="1"/></svg>
  <div class="plab" style="left:370px;top:6px">标题(T)</div>
  <div class="a" style="left:404px;top:5px;width:59px;height:12px;background:#d2d2d2;border:1px solid #b0b0b0"></div>
  <div class="plab" style="left:370px;top:21px">目标(G)</div>
  <div class="a" style="left:404px;top:20px;width:45px;height:12px;background:#e6e6e6;border:1px solid #b8b8b8"></div>
  <svg class="dd" style="left:441px;top:25px" width="6" height="4"><path d="M0,0h6l-3,3.5z" fill="#999"/></svg>
  <div class="a" style="left:1px;top:34px;width:1252px;height:1px;background:#c4c4c4;border-bottom:1px solid #e8e8e8"></div>
  <div class="pbtn" style="left:252px;top:39px;width:69px">页面属性...</div>
  <div class="pbtn" style="left:327px;top:39px;width:56px;color:#999;border-color:#b8b8b8">列表项目...</div>
  <svg class="a" style="left:1238px;top:4px" width="11" height="11"><circle cx="5.5" cy="5.5" r="4.5" fill="#fff" stroke="#222" stroke-width="1.1"/><path d="M3.8,4.2C3.8,2 7.2,2 7.2,4.2C7.2,5.5 5.5,5.5 5.5,7" fill="none" stroke="#222" stroke-width="1.1"/><circle cx="5.5" cy="8.5" r="0.7" fill="#222"/></svg>
  <svg class="a" style="left:1238px;top:60px" width="9" height="6"><path d="M0.5,5.5L4.5,1L8.5,5.5z" fill="none" stroke="#222"/></svg>
</div>
<div id="taskbar" class="a">
  <div class="a" style="left:7px;top:1px;width:20px;height:10px;border-radius:10px;background:radial-gradient(#9ad0f0,#3a7ab0)"></div>
  <div class="a" style="left:40px;top:0;width:39px;height:6px;background:linear-gradient(#c4c8cc,#80868c);border-radius:2px 2px 0 0"></div>
  <div class="a" style="left:100px;top:1px;width:10px;height:5px;background:#e0b030"></div>
  <div class="a" style="left:136px;top:1px;width:11px;height:5px;background:#c04040;border-radius:5px 5px 0 0"></div>
  <div class="a" style="left:174px;top:0;width:21px;height:6px;background:#d02020;border-radius:3px 3px 0 0"></div>
  <div class="a" style="left:215px;top:1px;width:18px;height:5px;border:1px solid #30c0d0;border-bottom:none"></div>
  <div class="a" style="left:257px;top:1px;width:19px;height:5px;border:1px solid #e08a20;border-bottom:none"></div>
  <div class="a" style="left:289px;top:0;width:38px;height:6px;background:linear-gradient(#b8bcc0,#70767c);border-radius:2px 2px 0 0"></div>
  <div class="a" style="left:329px;top:0;width:39px;height:6px;background:linear-gradient(#b8bcc0,#70767c);border-radius:2px 2px 0 0"></div>
  <div class="a" style="left:371px;top:0;width:39px;height:6px;background:linear-gradient(#b8bcc0,#70767c);border-radius:2px 2px 0 0"></div>
  <div class="a" style="left:385px;top:1px;width:12px;height:5px;border:1px solid #40c040;border-bottom:none"></div>
</div>
</body></html>
